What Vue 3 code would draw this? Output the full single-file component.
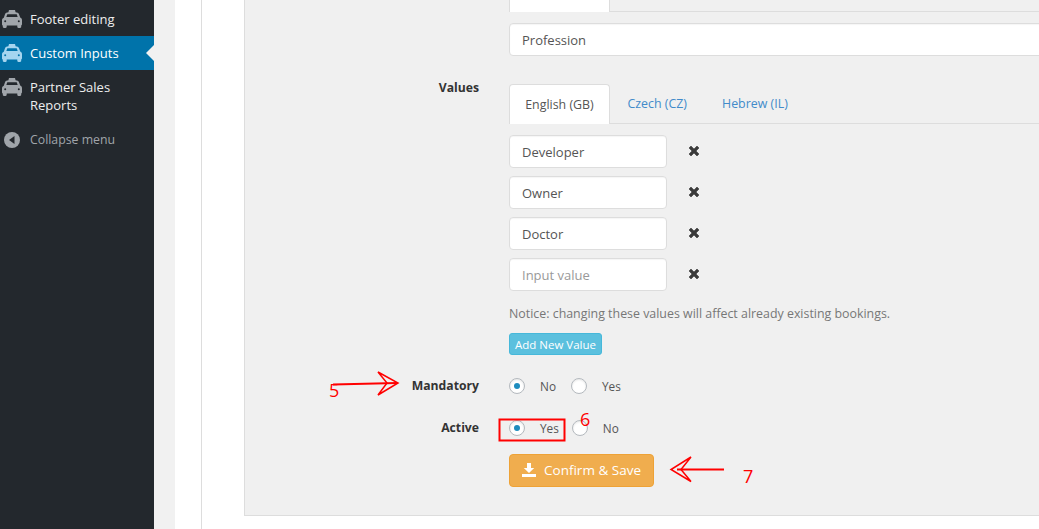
<script setup>
const menu = [
  { label: 'Footer editing' },
  { label: 'Custom Inputs', active: true },
  { label: 'Partner Sales Reports' }
]
const tabs = ['English (GB)', 'Czech (CZ)', 'Hebrew (IL)']
const values = [
  { value: 'Developer' },
  { value: 'Owner' },
  { value: 'Doctor' },
  { value: '', placeholder: 'Input value' }
]
</script>

<template>
  <div class="page">
    <aside class="sidebar">
      <ul class="menu">
        <li v-for="item in menu" :key="item.label" class="menu-item" :class="{ active: item.active }">
          <svg class="car" viewBox="0 0 22 18" width="22" height="18">
            <path fill="currentColor" d="M8 0h6l.6 2.200c1.700.1 2.800.6 3.300 1.800l1.300 3.600c1.200.6 1.800 1.400 1.800 2.600v4c0 .6-.3 1-.8 1.200v1.400c0 .7-.4 1.200-1.100 1.200h-1.700c-.7 0-1.100-.5-1.100-1.200v-1.200H5.700v1.200c0 .7-.4 1.200-1.100 1.200H2.900c-.7 0-1.100-.5-1.100-1.200v-1.400C1.300 15.400 1 15 1 14.400v-4c0-1.200.6-2 1.800-2.600L4.100 4c.5-1.200 1.600-1.700 3.300-1.800z"/>
            <path class="glass" d="M6.300 4.300h9.400l1 2.800H5.300z"/>
            <circle class="glass" cx="4.200" cy="11.300" r="1"/>
            <circle class="glass" cx="17.800" cy="11.300" r="1"/>
          </svg>
          <span class="menu-label">{{ item.label }}</span>
        </li>
        <li class="collapse">
          <svg viewBox="0 0 16 16" width="16" height="16">
            <circle cx="8" cy="8" r="8" fill="#a0a5aa"/>
            <path d="M10.500 4v8L5 8z" fill="#23282d"/>
          </svg>
          <span>Collapse menu</span>
        </li>
      </ul>
    </aside>

    <div class="gutter"></div>

    <main class="sheet">
      <div class="white-strip"></div>
      <section class="panel">
        <div class="tabbar first-tabbar">
          <div class="tab current"></div>
        </div>
        <div class="row-field">
          <input class="text wide" value="Profession" readonly />
        </div>

        <div class="row values-row">
          <label class="label values-label">Values</label>
          <div class="control">
            <div class="tabbar">
              <div v-for="(t, i) in tabs" :key="t" class="tab" :class="{ current: i === 0 }">{{ t }}</div>
            </div>
            <div class="value-list">
              <div v-for="(v, i) in values" :key="i" class="value-row">
                <input class="text small" :value="v.value" :placeholder="v.placeholder" readonly />
                <svg class="remove" viewBox="0 0 12 12" width="12" height="12">
                  <path d="M3 1 6 4l3-3 2 2-3 3 3 3-2 2-3-3-3 3-2-2 3-3-3-3z" fill="#3a3a3a" stroke="#3a3a3a" stroke-width=".6" stroke-linejoin="round"/>
                </svg>
              </div>
            </div>
            <p class="notice">Notice: changing these values will affect already existing bookings.</p>
            <button class="btn-info" type="button">Add New Value</button>
          </div>
        </div>

        <div class="row radio-row mandatory">
          <label class="label">Mandatory</label>
          <div class="radios">
            <span class="radio on"></span><span class="radio-text gap-one">No</span>
            <span class="radio"></span><span class="radio-text">Yes</span>
          </div>
        </div>

        <div class="row radio-row activeline">
          <label class="label">Active</label>
          <div class="radios">
            <span class="radio on"></span><span class="radio-text gap-two">Yes</span>
            <span class="radio"></span><span class="radio-text">No</span>
          </div>
        </div>

        <div class="confirm-row">
          <button class="btn-warning" type="button">
            <svg viewBox="0 0 14 14" width="14" height="14">
              <path d="M5 0h4v5h3.200L7 10 1.800 5H5zM0 11h14v3H0z" fill="#fff"/>
            </svg>
            <span>Confirm &amp; Save</span>
          </button>
        </div>
      </section>
    </main>

    <!-- Hand-drawn annotations lying over the screenshot -->
    <svg class="marks" viewBox="0 0 1039 529" width="1039" height="529">
      <g fill="none" stroke="#f00" stroke-width="2">
        <rect x="499.500" y="419.500" width="65" height="21"/>
        <path d="M333 384.500l64-1.500"/>
        <path d="M378 372l20 11-20 12 9-12z" stroke-width="1.500"/>
        <path d="M724 469.500h-47"/>
        <path d="M691 457l-20 12.500 20 12-10-12z" stroke-width="1.500"/>
      </g>
      <text x="329" y="397" class="mark">5</text>
      <text x="580" y="426" class="mark">6</text>
      <text x="743" y="483" class="mark">7</text>
    </svg>
  </div>
</template>

<style>
html, body { margin: 0; padding: 0; background: #fff; overflow: hidden; }
</style>

<style scoped>
.page {
  position: relative;
  display: flex;
  width: 1039px;
  height: 529px;
  overflow: hidden;
  font-family: "Open Sans", "Noto Sans", sans-serif;
  font-size: 13px;
  color: #333;
  background: #fff;
}
.sidebar { width: 154px; flex: none; background: #23282d; }
.menu { list-style: none; margin: 0; padding: 2px 0 0; }
.menu-item {
  display: flex;
  gap: 7px;
  padding: 8px 10px 8px 1px;
  color: #eee;
  font-size: 13px;
  line-height: 18px;
  position: relative;
}
.menu-item .car { color: #a0a5aa; flex: none; }
.menu-item .glass { fill: #23282d; }
.menu-label { min-width: 0; }
.menu-item.active { background: #0073aa; color: #fff; }
.menu-item.active .car { color: #a5d5ef; }
.menu-item.active .glass { fill: #0073aa; }
.menu-item.active::after {
  content: "";
  position: absolute;
  right: 0;
  top: 9px;
  border: 8px solid transparent;
  border-right-color: #f1f1f1;
  border-left-width: 0;
}
.collapse {
  display: flex;
  align-items: center;
  gap: 10px;
  padding: 9px 4px;
  color: #a0a5aa;
  font-size: 12.300px;
  line-height: 18px;
}
.gutter { width: 21px; flex: none; background: #f1f1f1; }
.sheet { flex: 1; display: flex; min-width: 0; background: #fff; }
.white-strip { width: 26px; flex: none; border-right: 1px solid #ddd; margin-right: 42px; }
.panel {
  flex: 1;
  min-width: 0;
  height: 516px;
  box-sizing: border-box;
  background: #f0f0f0;
  border-left: 1px solid #ddd;
  border-bottom: 1px solid #ddd;
  padding-left: 264px;
}
.tabbar { display: flex; height: 40px; border-bottom: 1px solid #ddd; box-sizing: border-box; }
.first-tabbar { margin-top: -28px; }
.tab {
  padding: 11px 17.500px 0;
  color: #428bca;
  font-size: 12.400px;
  line-height: 18px;
  height: 40px;
  box-sizing: border-box;
}
.tab.current {
  width: 101px;
  padding: 11px 0 0;
  text-align: center;
  background: #fff;
  color: #555;
  border: 1px solid #ddd;
  border-bottom: none;
  border-radius: 4px 4px 0 0;
}
.row-field { margin-top: 11px; }
.text {
  display: block;
  box-sizing: border-box;
  width: 100%;
  height: 33px;
  padding: 0 12px;
  border: 1px solid #ddd;
  border-radius: 4px;
  background: #fff;
  font: 13px "Open Sans", "Noto Sans", sans-serif;
  color: #555;
  box-shadow: inset 0 1px 1px rgba(0,0,0,.04);
  outline: none;
}
.text::placeholder { color: #999; opacity: 1; }
.text.wide { width: calc(100% + 12px); }
.text.small { width: 158px; }
.row { display: flex; margin-left: -264px; }
.label {
  width: 234px;
  flex: none;
  text-align: right;
  font-weight: 700;
  font-size: 12.200px;
  line-height: 18px;
  color: #333;
}
.values-row { margin-top: 28px; }
.values-label { margin-top: -5px; }
.control { margin-left: 30px; flex: 1; min-width: 0; }
.value-list { margin-top: 11px; display: flex; flex-direction: column; gap: 8px; }
.value-row { display: flex; align-items: center; gap: 21px; }
.remove { margin-top: -2px; }
.notice {
  margin: 14px 0 0;
  font-size: 12.400px;
  line-height: 18px;
  color: #777;
}
.btn-info {
  display: block;
  margin-top: 10px;
  height: 22px;
  width: 93px;
  padding: 0;
  border: 1px solid #46b8da;
  border-radius: 3px;
  background: #5bc0de;
  color: #fff;
  font: 11.500px "Open Sans", "Noto Sans", sans-serif;
}
.radio-row { align-items: center; height: 18px; }
.mandatory { margin-top: 22px; }
.activeline { margin-top: 24px; }
.radios { display: flex; align-items: center; margin-left: 30px; }
.radio {
  width: 16px;
  height: 16px;
  box-sizing: border-box;
  flex: none;
  border: 1px solid #b4b9be;
  border-radius: 50%;
  background: #fff;
  position: relative;
  box-shadow: inset 0 1px 2px rgba(0,0,0,.1);
}
.radio.on::after {
  content: "";
  position: absolute;
  left: 4px;
  top: 4px;
  width: 6px;
  height: 6px;
  border-radius: 50%;
  background: #1e8cbe;
}
.radio-text { margin-left: 15px; font-size: 11.800px; color: #555; line-height: 18px; }
.gap-one { margin-right: 15px; }
.gap-two { margin-right: 13px; }
.confirm-row { margin-top: 17px; }
.btn-warning {
  display: flex;
  align-items: center;
  justify-content: center;
  gap: 8px;
  width: 145px;
  height: 33px;
  padding: 0 0 2px;
  border: 1px solid #eea236;
  border-radius: 4px;
  background: #f0ad4e;
  color: #fff;
  font: 13.500px "Open Sans", "Noto Sans", sans-serif;
}
.marks { position: absolute; left: 0; top: 0; pointer-events: none; }
.mark { fill: #f00; font-family: "Open Sans", sans-serif; font-size: 18px; }
</style>
